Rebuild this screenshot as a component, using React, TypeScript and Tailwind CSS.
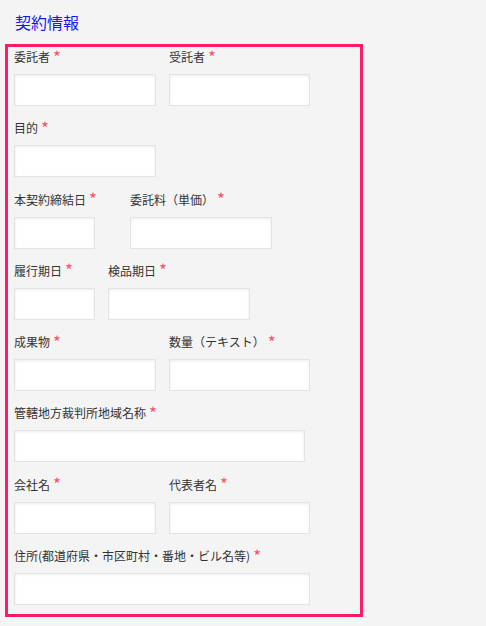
type Field = {
  label: string;
  inputWidth: string;
  fieldWidth?: string;
};

const rows: Field[][] = [
  [
    { label: "委託者", inputWidth: "w-[142px]" },
    { label: "受託者", inputWidth: "w-[141px]" },
  ],
  [{ label: "目的", inputWidth: "w-[142px]" }],
  [
    { label: "本契約締結日", inputWidth: "w-[81px]", fieldWidth: "w-[103px]" },
    { label: "委託料（単価）", inputWidth: "w-[142px]" },
  ],
  [
    { label: "履行期日", inputWidth: "w-[81px]" },
    { label: "検品期日", inputWidth: "w-[142px]" },
  ],
  [
    { label: "成果物", inputWidth: "w-[142px]" },
    { label: "数量（テキスト）", inputWidth: "w-[141px]" },
  ],
  [{ label: "管轄地方裁判所地域名称", inputWidth: "w-[291px]" }],
  [
    { label: "会社名", inputWidth: "w-[142px]" },
    { label: "代表者名", inputWidth: "w-[141px]" },
  ],
  [
    {
      label: "住所(都道府県・市区町村・番地・ビル名等)",
      inputWidth: "w-[296px]",
    },
  ],
];

function FormField({ field }: { field: Field }) {
  return (
    <div className={`flex flex-col ${field.fieldWidth ?? ""}`}>
      <label className="mb-2 flex h-[18px] items-center whitespace-nowrap text-xs leading-[18px] text-[#333]">
        {field.label}
        <span className="ml-[3px] -mt-[2px] text-[17px] leading-none text-[#f4566e]">
          *
        </span>
      </label>
      <input
        type="text"
        className={`h-8 border border-[#e4e4e4] bg-white shadow-[inset_0_1px_3px_rgba(0,0,0,0.08)] outline-none ${field.inputWidth}`}
      />
    </div>
  );
}

export default function App() {
  return (
    <div
      className="min-h-[626px] bg-[#f4f4f4] pt-[10px] pl-[5px]"
      style={{ fontFamily: '"Noto Sans CJK JP", "Noto Sans", sans-serif' }}
    >
      <h2 className="pl-[10px] text-base leading-6 text-[#1414ff]">契約情報</h2>
      <div className="mt-[10px] w-[358px] border-[3px] border-[#fe1b65] px-[6px] pt-px pb-[9px]">
        <div className="flex flex-col gap-[13.3px]">
          {rows.map((row, i) => (
            <div key={i} className="flex gap-[13px]">
              {row.map((field) => (
                <FormField key={field.label} field={field} />
              ))}
            </div>
          ))}
        </div>
      </div>
    </div>
  );
}
